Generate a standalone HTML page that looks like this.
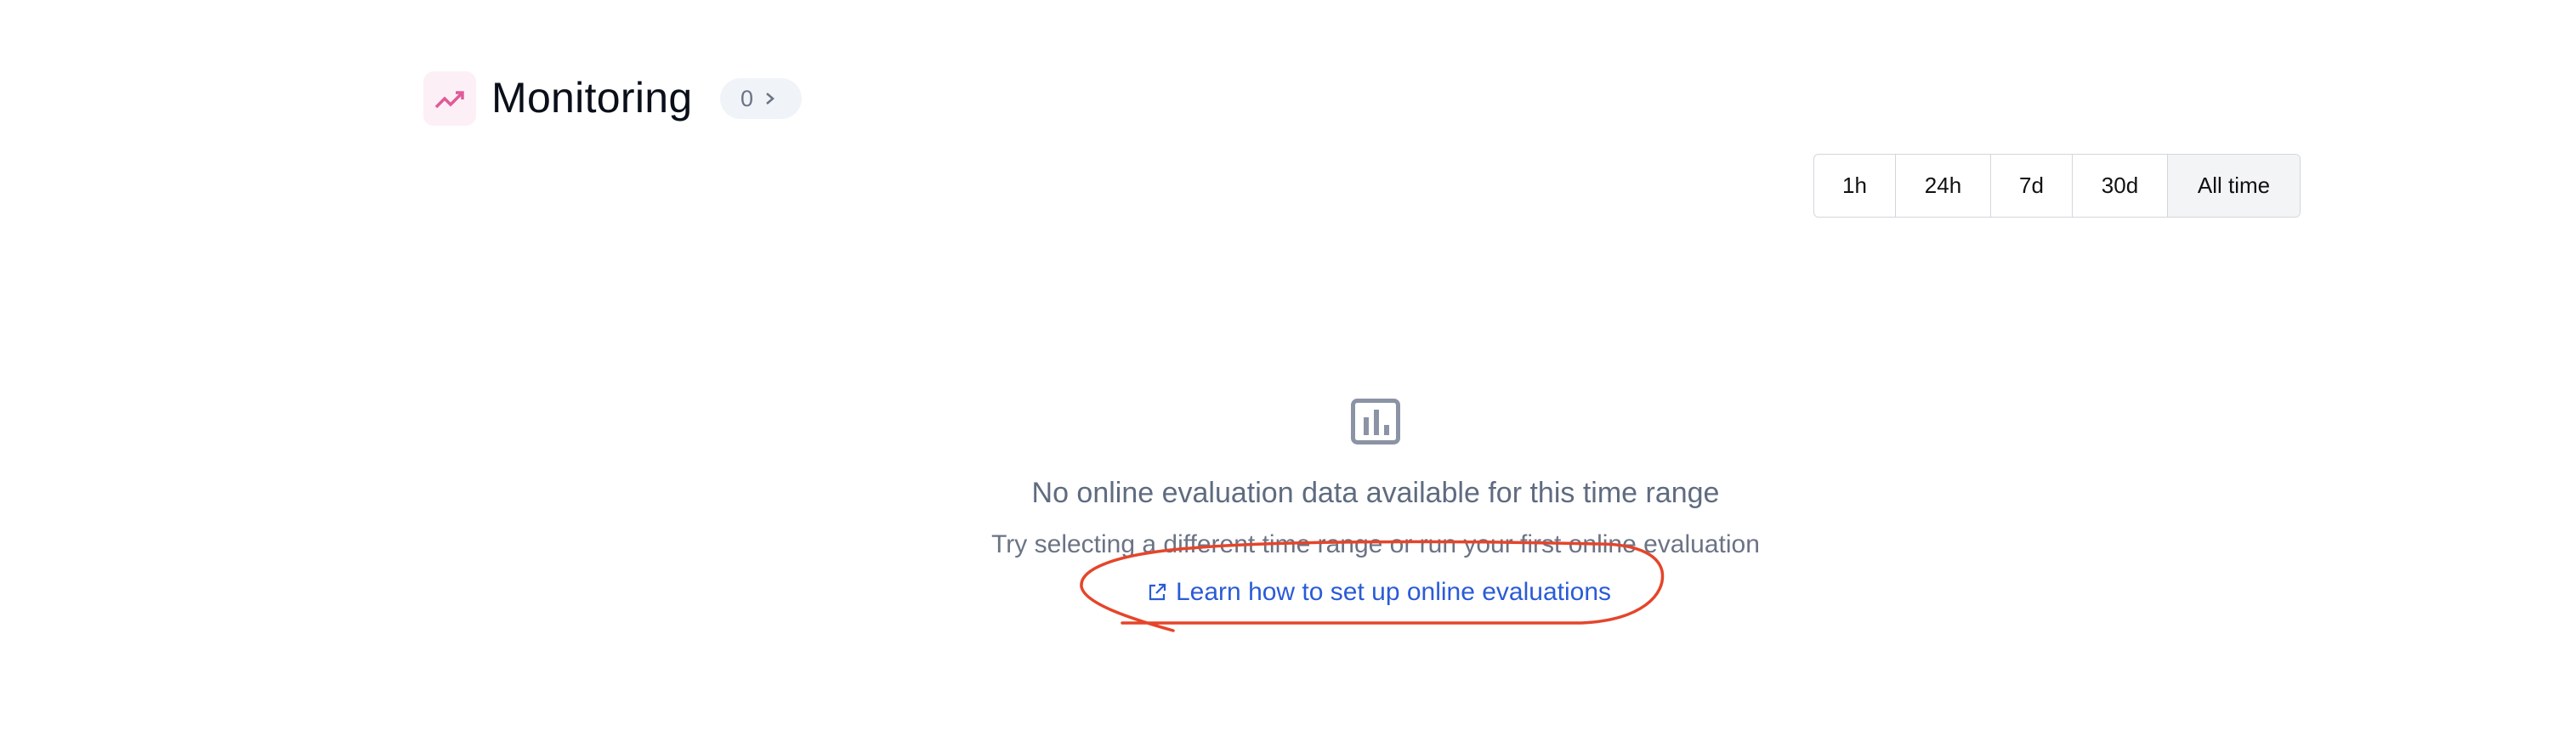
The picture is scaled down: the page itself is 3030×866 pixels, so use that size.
<!DOCTYPE html>
<html><head><style>
html,body{margin:0;padding:0;background:#fff;width:3030px;height:866px;overflow:hidden;font-family:"Liberation Sans",sans-serif;position:relative}
.abs{position:absolute}
.ib{left:498px;top:84px;width:62px;height:64px;border-radius:12px;background:#fcf0f6}
.title{left:578px;top:80px;font-size:50px;line-height:70px;color:#0a0f1a;letter-spacing:0.3px}
.pill{left:847px;top:92px;width:96px;height:48px;border-radius:24px;background:#f0f3f8;color:#6b7385;font-size:27px;line-height:48px}
.seg{left:2133px;top:181px;height:73px;width:571px;border:1.5px solid #d3d6db;border-radius:6px;overflow:hidden;display:flex}
.seg div{height:73px;line-height:73px;text-align:center;font-size:26px;color:#111;border-right:1.5px solid #d3d6db;box-sizing:border-box}
.seg div:last-child{border-right:none;background:#f3f4f6;flex:1}
.h{left:0;width:3236px;text-align:center;top:559px;font-size:34px;line-height:42px;color:#5f6b80;font-weight:500}
.s{left:0;width:3236px;text-align:center;top:622px;font-size:30px;line-height:38px;color:#6b7385}
.l{left:1349px;top:678px;font-size:30px;line-height:38px;color:#2a5bd7}
</style></head><body>
<div class="abs ib"><svg width="62" height="64" viewBox="0 0 62 64"><path d="M15 42 L25 32 L32 39 L46 25 M38 25 H46 V33" fill="none" stroke="#e05a97" stroke-width="3.5"/></svg></div>
<div class="abs title">Monitoring</div>
<div class="abs pill"><span style="position:absolute;left:24px">0</span><svg style="position:absolute;left:52px;top:16px" width="14" height="16" viewBox="0 0 14 16"><path d="M3 2 L10 8 L3 14" fill="none" stroke="#6b7385" stroke-width="2.5"/></svg></div>
<div class="abs seg">
<div style="width:96px">1h</div><div style="width:112px">24h</div><div style="width:96px">7d</div><div style="width:112px">30d</div><div>All time</div>
</div>
<svg class="abs" style="left:1589px;top:469px" width="58" height="54" viewBox="0 0 58 54"><rect x="2.5" y="2.5" width="53" height="49" rx="5" fill="none" stroke="#8b93a5" stroke-width="5"/><rect x="15" y="22" width="6" height="21" fill="#8b93a5"/><rect x="27" y="13" width="6" height="30" fill="#8b93a5"/><rect x="39" y="31" width="6" height="12" fill="#8b93a5"/></svg>
<div class="abs h">No online evaluation data available for this time range</div>
<div class="abs s">Try selecting a different time range or run your first online evaluation</div>
<div class="abs l"><svg style="vertical-align:-3px;margin-right:10px" width="24" height="24" viewBox="0 0 24 24"><path d="M10 4 H4 V20 H20 V14 M14 3 H21 V10 M21 3 L11 13" fill="none" stroke="#2a5bd7" stroke-width="2.2"/></svg>Learn how to set up online evaluations</div>
<svg class="abs" style="left:0;top:0" width="3030" height="866"><path d="M1320 733 L1860 733 C1930 730 1960 700 1955 672 C1950 650 1920 640 1880 640 C1700 636 1500 636 1400 645 C1310 652 1270 670 1272 690 C1275 710 1330 728 1380 742" fill="none" stroke="#e5452a" stroke-width="3.5" stroke-linecap="round"/></svg>
</body></html>
